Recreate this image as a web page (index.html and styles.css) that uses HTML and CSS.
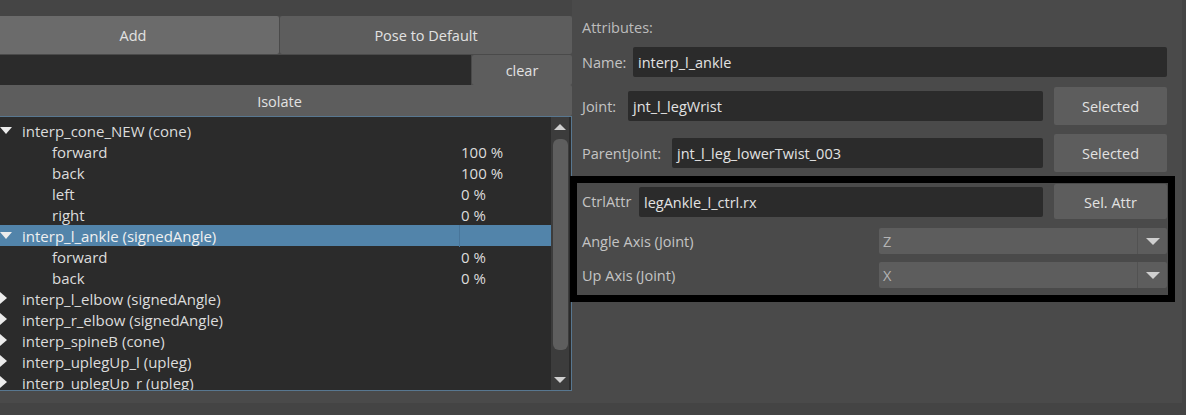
FILE: index.html
```html
<!DOCTYPE html>
<html>
<head>
<meta charset="utf-8">
<link rel="stylesheet" href="styles.css">
</head>
<body>
<div class="app">
  <div class="main">
    <div class="left">
      <div class="btn-row">
        <div class="btn btn-hot btn-half">Add</div>
        <div class="btn btn-half">Pose to Default</div>
      </div>
      <div class="search-row">
        <div class="search"></div>
        <div class="btn btn-clear">clear</div>
      </div>
      <div class="btn btn-isolate">Isolate</div>
      <div class="tree">
        <div class="rows">
          <div class="row"><div class="name"><span class="arrow-down"></span>interp_cone_NEW (cone)</div><div class="val"></div></div>
          <div class="row"><div class="name child">forward</div><div class="val">100 %</div></div>
          <div class="row"><div class="name child">back</div><div class="val">100 %</div></div>
          <div class="row"><div class="name child">left</div><div class="val">0 %</div></div>
          <div class="row"><div class="name child">right</div><div class="val">0 %</div></div>
          <div class="row row-sel"><div class="name"><span class="arrow-down"></span>interp_l_ankle (signedAngle)</div><div class="val"></div></div>
          <div class="row"><div class="name child">forward</div><div class="val">0 %</div></div>
          <div class="row"><div class="name child">back</div><div class="val">0 %</div></div>
          <div class="row"><div class="name"><span class="arrow-right"></span>interp_l_elbow (signedAngle)</div><div class="val"></div></div>
          <div class="row"><div class="name"><span class="arrow-right"></span>interp_r_elbow (signedAngle)</div><div class="val"></div></div>
          <div class="row"><div class="name"><span class="arrow-right"></span>interp_spineB (cone)</div><div class="val"></div></div>
          <div class="row"><div class="name"><span class="arrow-right"></span>interp_uplegUp_l (upleg)</div><div class="val"></div></div>
          <div class="row"><div class="name"><span class="arrow-right"></span>interp_uplegUp_r (upleg)</div><div class="val"></div></div>
        </div>
        <div class="scrollbar">
          <div class="sb-btn"><span class="sb-up"></span></div>
          <div class="sb-track"><div class="sb-handle"></div></div>
          <div class="sb-btn"><span class="sb-down"></span></div>
        </div>
      </div>
    </div>
    <div class="right">
      <div class="title">Attributes:</div>
      <div class="field-row field-row-name">
        <div class="lbl lbl-name">Name:</div>
        <div class="input">interp_l_ankle</div>
      </div>
      <div class="field-row field-row-btn field-row-joint">
        <div class="lbl lbl-joint">Joint:</div>
        <div class="input">jnt_l_legWrist</div>
        <div class="btn btn-side">Selected</div>
      </div>
      <div class="field-row field-row-btn">
        <div class="lbl lbl-parent">ParentJoint:</div>
        <div class="input">jnt_l_leg_lowerTwist_003</div>
        <div class="btn btn-side">Selected</div>
      </div>
      <div class="blackbox">
        <div class="field-row field-row-ctrl">
          <div class="lbl lbl-ctrl">CtrlAttr</div>
          <div class="input">legAnkle_l_ctrl.rx</div>
          <div class="btn btn-side btn-ctrl">Sel. Attr</div>
        </div>
        <div class="combo-row combo-row-first">
          <div class="lbl lbl-combo">Angle Axis (Joint)</div>
          <div class="combo"><div class="combo-text">Z</div><div class="combo-arrow"><span class="cb-down"></span></div></div>
        </div>
        <div class="combo-row">
          <div class="lbl lbl-combo">Up Axis (Joint)</div>
          <div class="combo"><div class="combo-text">X</div><div class="combo-arrow"><span class="cb-down"></span></div></div>
        </div>
      </div>
    </div>
  </div>
</div>
</body>
</html>
```
FILE: styles.css
```css
* { box-sizing: border-box; }
html, body { margin: 0; padding: 0; }
body {
  width: 1186px;
  height: 415px;
  overflow: hidden;
  background: #444444;
  font-family: "Open Sans", "Noto Sans", sans-serif;
  font-size: 14.5px;
  color: #dcdcdc;
}
.app {
  width: 1182px;
  height: 403px;
  background: #4a4a4a;
  overflow: hidden;
}
.main { display: flex; align-items: flex-start; }

/* ---------- left panel ---------- */
.left {
  width: 585px;
  margin-left: -13px;
  flex: none;
  padding-top: 16px;
  background: linear-gradient(#454545, #454545) top / 100% 16px no-repeat;
}
.btn {
  background: #5d5d5d;
  color: #e2e2e2;
  border-radius: 2px;
  display: flex;
  align-items: center;
  justify-content: center;
  white-space: nowrap;
  padding-top: 1px;
}
.btn-hot { background: #6b6b6b; }
.btn-row { display: flex; gap: 1px; height: 38px; }
.btn-half { flex: 1; }
.search-row { display: flex; gap: 1px; height: 30px; margin-top: 1px; }
.search { width: 484px; background: #2b2b2b; }
.btn-clear { flex: 1; }
.btn-isolate { height: 31px; }

.tree {
  display: flex;
  height: 275px;
  border: 1px solid #587790;
  background: #2b2b2b;
  padding-right: 2px;
}
.rows {
  flex: 1;
  padding-top: 3px;
  overflow: hidden;
  font-size: 15px;
}
.row {
  display: grid;
  grid-template-columns: 471px 1fr;
  height: 21px;
  line-height: 22px;
  white-space: nowrap;
}
.row-sel { background: #5284aa; color: #f0f0f0; }
.row-sel .val { border-left: 1px solid #48759a; }
.name {
  position: relative;
  padding-left: 34px;
}
.name.child { padding-left: 64px; }
.val { padding-left: 1px; border-left: 1px solid transparent; }
.arrow-down {
  position: absolute;
  left: 12px;
  top: 7px;
  width: 0; height: 0;
  border-left: 6px solid transparent;
  border-right: 6px solid transparent;
  border-top: 7px solid #ececec;
}
.arrow-right {
  position: absolute;
  left: 12px;
  top: 4px;
  width: 0; height: 0;
  border-top: 6px solid transparent;
  border-bottom: 6px solid transparent;
  border-left: 7px solid #ececec;
}
.scrollbar {
  width: 18px;
  display: flex;
  flex-direction: column;
  background: #3c3c3c;
}
.sb-btn {
  height: 20px;
  display: flex;
  align-items: center;
  justify-content: center;
}
.sb-up {
  width: 0; height: 0;
  border-left: 6px solid transparent;
  border-right: 6px solid transparent;
  border-bottom: 6px solid #d0d0d0;
}
.sb-down {
  width: 0; height: 0;
  border-left: 6px solid transparent;
  border-right: 6px solid transparent;
  border-top: 6px solid #d0d0d0;
}
.sb-track { flex: 1; padding: 2px 1px 0 2px; }
.sb-handle {
  height: 211px;
  background: #5e5e5e;
  border-radius: 6px;
}

/* ---------- right panel ---------- */
.right {
  flex: 1;
  padding: 18px 15px 0 10px;
}
.title { height: 20px; line-height: 20px; color: #bdbdbd; }
.lbl { color: #c4c4c4; white-space: nowrap; flex: none; }
.field-row { display: flex; align-items: center; }
.field-row-name { margin-top: 9px; height: 30px; }
.field-row-btn { margin-top: 9px; height: 38px; }
.field-row-joint { margin-top: 10px; }
.lbl-name { width: 51px; }
.lbl-joint { width: 46px; }
.lbl-parent { width: 90px; }
.lbl-ctrl { width: 57px; }
.input {
  flex: 1;
  height: 30px;
  line-height: 31px;
  background: #2b2b2b;
  border-radius: 2px;
  padding-left: 5px;
  color: #e2e2e2;
  white-space: nowrap;
}
.btn-side { width: 113px; height: 38px; margin-left: 11px; flex: none; }

.blackbox {
  margin: 4px -8px 0 -12px;
  border: 7px solid #000;
  padding: 1px 1px 7px 5px;
  background: #4a4a4a;
}
.field-row-ctrl { height: 35px; }
.btn-ctrl { height: 35px; }
.combo-row { display: flex; align-items: center; height: 26px; margin-top: 8px; }
.combo-row-first { margin-top: 9px; }
.lbl-combo { width: 297px; }
.combo {
  flex: 1;
  height: 26px;
  display: flex;
  background: #5d5d5d;
  border-radius: 2px;
}
.combo-text { flex: 1; padding-left: 4px; line-height: 27px; color: #b4b4b4; }
.combo-arrow {
  width: 30px;
  border-left: 1px solid #525252;
  display: flex;
  align-items: center;
  justify-content: center;
}
.cb-down {
  width: 0; height: 0;
  border-left: 7px solid transparent;
  border-right: 7px solid transparent;
  border-top: 7px solid #cfcfcf;
}
```
